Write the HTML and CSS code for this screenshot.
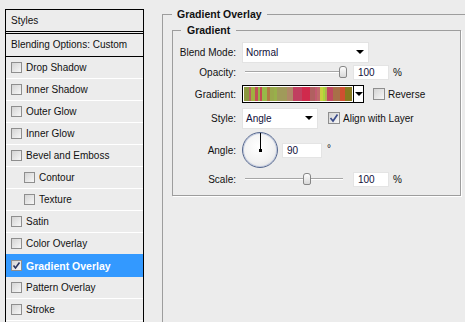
FILE: index.html
```html
<!DOCTYPE html>
<html>
<head>
	<meta charset="UTF-8">
	<title>Layer Style</title>
	<link rel="stylesheet" href="styles.css">
</head>
<body>
	<div class="dialog">
		<div class="styles-list">
			<div class="list-head">Styles</div>
			<div class="list-opt">Blending Options: Custom</div>
			<div class="list-item"><span class="cb"></span>Drop Shadow</div>
			<div class="list-item"><span class="cb"></span>Inner Shadow</div>
			<div class="list-item"><span class="cb"></span>Outer Glow</div>
			<div class="list-item"><span class="cb"></span>Inner Glow</div>
			<div class="list-item"><span class="cb"></span>Bevel and Emboss</div>
			<div class="list-item sub"><span class="cb"></span>Contour</div>
			<div class="list-item sub"><span class="cb"></span>Texture</div>
			<div class="list-item"><span class="cb"></span>Satin</div>
			<div class="list-item"><span class="cb"></span>Color Overlay</div>
			<div class="list-item active"><span class="cb"><svg width="9" height="9" viewBox="0 0 9 9"><path d="M1.5 4.5 L3.5 7 L7.5 1.5" fill="none" stroke="#2a3560" stroke-width="1.6"/></svg></span>Gradient Overlay</div>
			<div class="list-item"><span class="cb"></span>Pattern Overlay</div>
			<div class="list-item"><span class="cb"></span>Stroke</div>
		</div>

		<fieldset class="group outer">
			<legend>Gradient Overlay</legend>
			<fieldset class="group inner">
				<legend>Gradient</legend>

				<div class="row r-blend">
					<label>Blend Mode:</label>
					<div class="select blend"><span>Normal</span><i class="arrow"></i></div>
				</div>

				<div class="row r-opacity">
					<label>Opacity:</label>
					<div class="slider"><div class="track"></div><div class="thumb" style="left: 97px"></div></div>
					<div class="field">100</div>
					<span class="unit">%</span>
				</div>

				<div class="row r-gradient">
					<label>Gradient:</label>
					<div class="swatch"><div class="grad"></div><div class="drop"><i class="arrow"></i></div></div>
					<div class="check reverse"><span class="cb big"></span>Reverse</div>
				</div>

				<div class="row r-style">
					<label>Style:</label>
					<div class="select style"><span>Angle</span><i class="arrow"></i></div>
					<div class="check align"><span class="cb big"><svg width="10" height="10" viewBox="0 0 10 10"><path d="M1.5 5 L4 8 L8.5 1.5" fill="none" stroke="#3b4c8a" stroke-width="1.7"/></svg></span>Align with Layer</div>
				</div>

				<div class="row r-angle">
					<label>Angle:</label>
					<div class="dial"></div>
					<div class="field angle">90</div>
					<span class="deg">°</span>
				</div>

				<div class="row r-scale">
					<label>Scale:</label>
					<div class="slider"><div class="track"></div><div class="thumb" style="left: 61px"></div></div>
					<div class="field">100</div>
					<span class="unit">%</span>
				</div>
			</fieldset>
		</fieldset>
	</div>
</body>
</html>
```

FILE: styles.css
```css
body {
	margin: 0;
	background-color: #ececec;
	font-family: "Liberation Sans", Arial, sans-serif;
	font-size: 10px;
	color: #111;
	overflow: hidden;
}
.dialog {
	display: flex;
	align-items: flex-start;
	height: 322px;
	overflow: hidden;
}

/* left list */
.styles-list {
	flex: none;
	margin: 9px 0 0 5px;
	width: 139px;
	height: 313px;
	overflow: hidden;
	box-sizing: border-box;
	border: 1px solid #000;
	border-bottom: none;
}
.list-head {
	height: 21px;
	line-height: 21px;
	padding-left: 5px;
	border-bottom: 1px solid #000;
}
.list-opt {
	margin-top: 1px;
	height: 22px;
	line-height: 22px;
	padding-left: 5px;
	border-top: 1px solid #000;
	border-bottom: 1px solid #000;
}
.list-item {
	display: flex;
	align-items: center;
	height: 21px;
	padding-left: 5px;
	border-bottom: 1px solid #fff;
}
.list-item.sub {
	padding-left: 18px;
}
.list-item.active {
	background-color: #3399ff;
	border-bottom-color: #3399ff;
	box-shadow: 0 -1px 0 #3399ff;
	color: #fff;
	font-weight: bold;
	font-size: 10.5px;
}
.cb {
	flex: none;
	display: flex;
	align-items: center;
	justify-content: center;
	width: 11px;
	height: 11px;
	box-sizing: border-box;
	border: 1px solid #8e8e8e;
	background: linear-gradient(135deg, #d4d4d4, #f7f7f7);
	margin-right: 4px;
}
.cb.big {
	width: 12px;
	height: 12px;
	margin-right: 3px;
}

/* group boxes */
fieldset.group {
	margin: 0;
	min-width: 0;
	border: 1px solid #9d9d9d;
	box-sizing: border-box;
}
fieldset.group legend {
	font-weight: bold;
	font-size: 10.5px;
	line-height: 12px;
	padding: 0 5px;
}
.outer {
	margin: 8px 0 0 18px !important;
	width: 303px;
	height: 314px;
	padding: 4px 0 0 9px;
	flex: none;
	border-right: none !important;
	border-bottom: none !important;
}
.inner {
	width: 289px;
	padding: 5px 0 8px 0;
	box-shadow: 1px 1px 0 #fff;
}
.inner legend {
	margin-left: 8px;
	padding: 0 6px !important;
}

/* rows */
.row {
	display: flex;
	align-items: center;
}
.row label {
	width: 63px;
	margin-right: 6px;
	text-align: right;
	flex: none;
}
.r-blend { height: 22px; }
.r-opacity { height: 18px; }
.r-gradient { height: 26px; }
.r-style { height: 22px; }
.r-angle { height: 42px; }
.r-scale { height: 16px; }

.select {
	display: flex;
	align-items: center;
	justify-content: space-between;
	height: 21px;
	box-sizing: border-box;
	padding: 0 4px 0 3px;
	background-color: #fff;
	border: 1px solid #e3e3e3;
	color: #10103a;
}
.select.blend { width: 127px; }
.select.style { width: 76px; }
.arrow {
	width: 0;
	height: 0;
	border-left: 4px solid transparent;
	border-right: 4px solid transparent;
	border-top: 4px solid #000;
}

.slider {
	position: relative;
	width: 101px;
	height: 14px;
	flex: none;
}
.slider .track {
	position: absolute;
	left: 3px;
	right: 0;
	top: 6px;
	height: 1px;
	background-color: #a6a6a6;
	border-bottom: 1px solid #fff;
}
.slider .thumb {
	position: absolute;
	top: 1px;
	width: 8px;
	height: 12px;
	box-sizing: border-box;
	border: 1px solid #868686;
	border-radius: 3px 3px 2px 2px;
	background: linear-gradient(#fdfdfd, #d8d8d8);
}
.field {
	width: 36px;
	height: 15px;
	line-height: 13px;
	box-sizing: border-box;
	padding-left: 4px;
	background-color: #fff;
	border: 1px solid #e4e4e4;
	margin-left: 10px;
	color: #10103a;
}
.unit {
	margin-left: 4px;
}

.swatch {
	display: flex;
	width: 122px;
	height: 18px;
	box-sizing: border-box;
	border: 1px solid #000;
	background-color: #fff;
}
.swatch .grad {
	width: 108px;
	margin: 1px;
	flex: none;
	background: linear-gradient(to right,
		#8c9840 0 5px, #b86060 5px 7px, #a0b040 7px 11px, #c05058 11px 14px,
		#94b444 14px 16px, #c44a52 16px 18px, #98b848 18px 23px, #b07a44 23px 26px,
		#9aa84c 26px 30px, #98b04a 30px 33px, #a09a5a 33px 43px, #b08868 43px 49px,
		#c04060 49px 58px, #d02a4c 58px 66px, #b06060 66px 71px, #c25a70 71px 73px,
		#bf6a6a 73px 76px, #c8d040 76px 79px, #a8d838 79px 81px, #b0b050 81px 83px,
		#c04860 83px 89px, #a87048 89px 96px, #d05030 96px 101px, #887a20 101px 108px);
}
.swatch .drop {
	flex: 1;
	display: flex;
	align-items: center;
	justify-content: center;
	border-left: 1px solid #000;
}

.check {
	display: flex;
	align-items: center;
}
.check.reverse { margin-left: 9px; }
.check.align { margin-left: 10px; }

.dial {
	position: relative;
	width: 36px;
	height: 36px;
	box-sizing: border-box;
	border-radius: 50%;
	border: 1px solid #56688f;
	box-shadow: inset 0 0 0 1px #c5cde0;
	background: radial-gradient(circle at 45% 40%, #ffffff, #f2f2f2 55%, #dcdcdc);
	flex: none;
}
.dial::before {
	content: "";
	position: absolute;
	left: 17px;
	top: 0;
	width: 1px;
	height: 17px;
	background-color: #000;
}
.dial::after {
	content: "";
	position: absolute;
	left: 16px;
	top: 16px;
	width: 3px;
	height: 3px;
	background-color: #000;
}
.field.angle {
	width: 40px;
	margin-left: 4px;
}
.deg {
	margin-left: 5px;
	margin-top: -4px;
}
```
